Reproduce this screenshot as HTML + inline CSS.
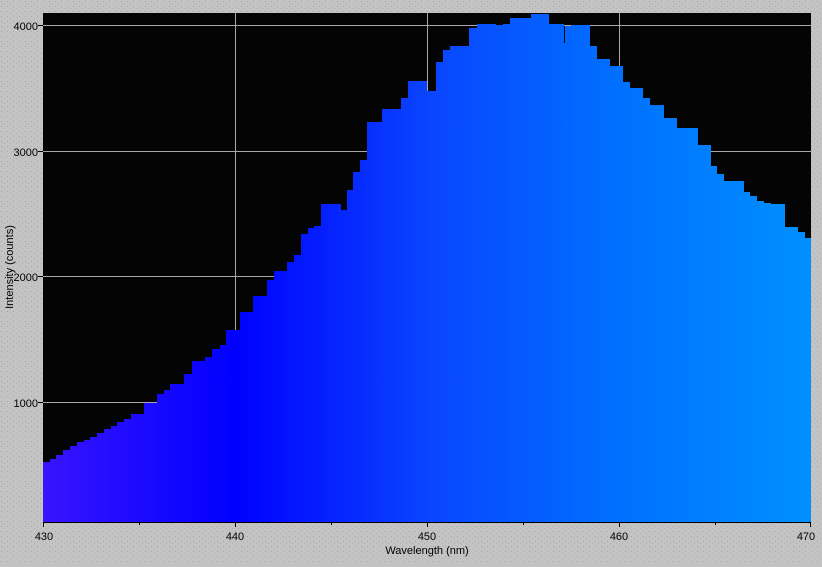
<!DOCTYPE html>
<html><head><style>
html,body{margin:0;padding:0;background:#c4c3c3;}
body{width:822px;height:562px;overflow:hidden;font-family:"Liberation Sans",sans-serif;}
</style></head><body>
<svg width="822" height="562" xmlns="http://www.w3.org/2000/svg" font-family="Liberation Sans, sans-serif" font-size="11">
<defs>
<linearGradient id="g" x1="43" x2="811" y1="0" y2="0" gradientUnits="userSpaceOnUse">
<stop offset="0" stop-color="#3814ff"/>
<stop offset="0.25" stop-color="#0000ff"/>
<stop offset="0.5" stop-color="#0a44ff"/>
<stop offset="0.75" stop-color="#0070ff"/>
<stop offset="1" stop-color="#0090ff"/>
</linearGradient>
<pattern id="dots" width="6" height="5" patternUnits="userSpaceOnUse"><rect x="1" y="1" width="1" height="1" fill="#a8a8a8"/><rect x="4" y="3" width="1" height="1" fill="#b0b0b0"/></pattern>
</defs>
<rect width="822" height="562" fill="url(#dots)"/>
<rect x="43" y="13" width="768" height="509" fill="#050405"/>
<g stroke="#a8a8a8" stroke-width="1">
<line x1="43" x2="811" y1="25.5" y2="25.5"/><line x1="43" x2="811" y1="151.5" y2="151.5"/><line x1="43" x2="811" y1="276.5" y2="276.5"/><line x1="43" x2="811" y1="402.5" y2="402.5"/>
<line x1="235.5" x2="235.5" y1="13" y2="522"/><line x1="427.5" x2="427.5" y1="13" y2="522"/><line x1="619.5" x2="619.5" y1="13" y2="522"/>
</g>
<path fill="url(#g)" d="M43 522 V462 H50 V459 H56 V455 H63 V450 H70 V446 H77 V442 H84 V440 H90 V437 H97 V433 H104 V429 H111 V426 H117 V422 H124 V419 H131 V414 H144 V403 H157 V394 H164 V390 H170 V384 H184 V374 H192 V361 H205 V357 H212 V349 H220 V345 H226 V330 H240 V312 H253 V296 H267 V280 H274 V271 H287 V262 H294 V255 H301 V234 H308 V228 H314 V226 H321 V204 H341 V210 H347 V190 H353 V172 H360 V160 H367 V122 H382 V109 H401 V98 H408 V81 H427 V91 H436 V62 H443 V50 H450 V46 H469 V28 H477 V24 H496 V25 H503 V24 H510 V18 H531 V14 H549 V24 H564 V43 H565 V26 H571 V25 H590 V46 H597 V59 H610 V66 H623 V82 H630 V88 H643 V98 H650 V105 H664 V118 H677 V128 H698 V145 H711 V166 H717 V174 H724 V181 H744 V192 H750 V196 H757 V201 H764 V203 H771 V204 H785 V227 H798 V232 H805 V238 H811 V522 Z"/>
<g stroke="#000" stroke-width="1">
<line x1="43" x2="811" y1="522.5" y2="522.5"/>
<line x1="43.5" x2="43.5" y1="522" y2="527"/><line x1="235.5" x2="235.5" y1="522" y2="527"/><line x1="427.5" x2="427.5" y1="522" y2="527"/><line x1="619.5" x2="619.5" y1="522" y2="527"/><line x1="810.5" x2="810.5" y1="522" y2="527"/>
<line x1="139.5" x2="139.5" y1="522" y2="525"/><line x1="331.5" x2="331.5" y1="522" y2="525"/><line x1="523.5" x2="523.5" y1="522" y2="525"/><line x1="715.5" x2="715.5" y1="522" y2="525"/>
<line x1="38" x2="43" y1="25.5" y2="25.5"/><line x1="38" x2="43" y1="151.5" y2="151.5"/><line x1="38" x2="43" y1="276.5" y2="276.5"/><line x1="38" x2="43" y1="402.5" y2="402.5"/>
</g>
<g fill="#000" text-anchor="end">
<text x="38" y="30">4000</text><text x="38" y="156">3000</text><text x="38" y="281">2000</text><text x="38" y="407">1000</text>
</g>
<g fill="#000" text-anchor="middle">
<text x="44" y="540">430</text><text x="235" y="540">440</text><text x="427" y="540">450</text><text x="619" y="540">460</text><text x="806" y="540">470</text>
<text x="427" y="554">Wavelength (nm)</text>
<text transform="translate(13,267) rotate(-90)">Intensity (counts)</text>
</g>
</svg>
</body></html>
